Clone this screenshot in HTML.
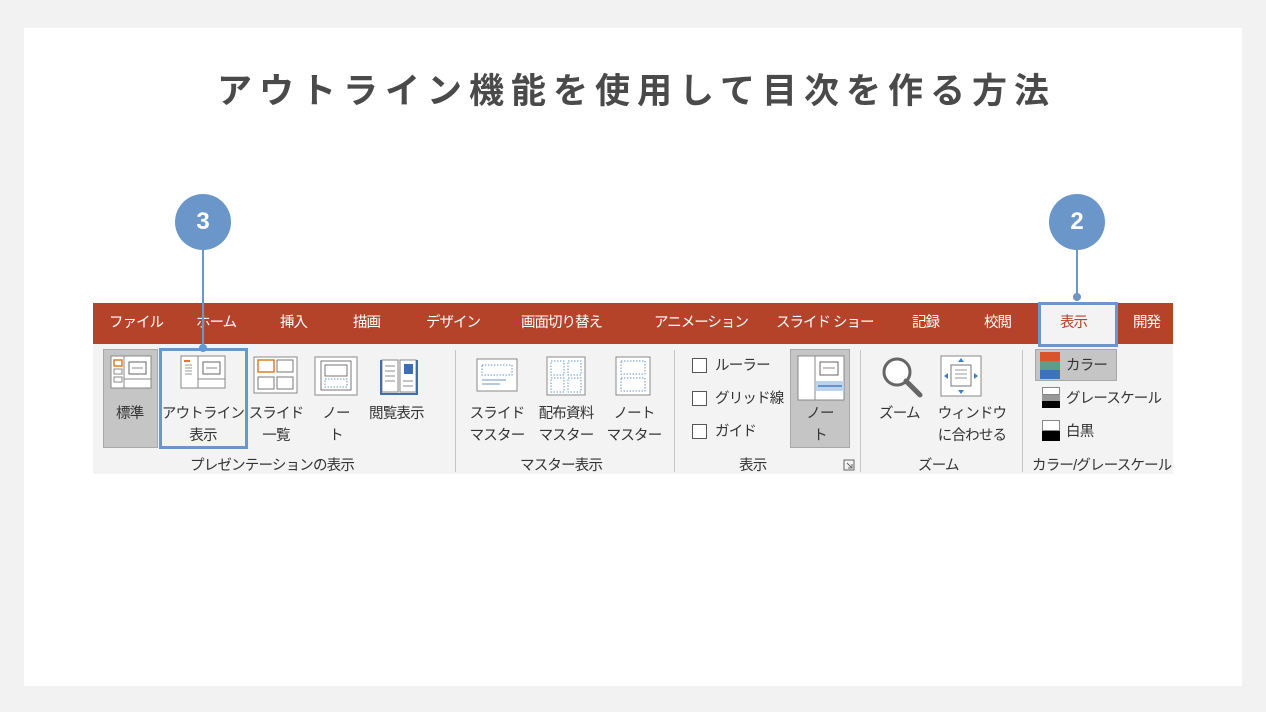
<!DOCTYPE html>
<html><head><meta charset="utf-8"><style>
*{margin:0;padding:0;box-sizing:border-box}
body{width:1266px;height:712px;background:#f2f2f2;position:relative;overflow:hidden;font-family:"Liberation Sans","Noto Sans CJK JP",sans-serif}
.card{position:absolute;left:24px;top:28px;width:1218px;height:658px;background:#fff}
.t{position:absolute;white-space:nowrap;color:#333;font-size:14.5px;line-height:22px;letter-spacing:-0.8px}
.c{text-align:center}
.title{position:absolute;left:0;width:1266px;top:70px;text-align:center;font-size:35px;font-weight:bold;color:#4a4a4a;letter-spacing:7px;line-height:44px;padding-left:7px}
.tabbar{position:absolute;left:93px;top:303px;width:1080px;height:41px;background:#b5432a}
.tab{position:absolute;top:313px;color:#fff;font-size:14.5px;line-height:20px;white-space:nowrap;letter-spacing:-1px}
.body{position:absolute;left:93px;top:344px;width:1080px;height:130px;background:#f3f3f3}
.sep{position:absolute;top:350px;width:1px;height:122px;background:#c6c6c6}
.press{position:absolute;background:#c5c5c5;border:1px solid #a8a8a8}
.circ{position:absolute;width:56px;height:56px;border-radius:50%;background:#6a96c9;color:#fff;font-weight:bold;font-size:24px;line-height:56px;text-align:center}
.line{position:absolute;width:2px;background:#6a96c9}
.box{position:absolute;border:3px solid #6a96c9}
.cb{position:absolute;width:15px;height:15px;border:1px solid #555;background:#fff}
svg{position:absolute}
</style></head><body>
<div class="card"></div>
<div class="title">アウトライン機能を使用して目次を作る方法</div>

<div class="tabbar"></div>
<div class="tab" style="left:109px">ファイル</div>
<div class="tab" style="left:196px">ホーム</div>
<div class="tab" style="left:280px">挿入</div>
<div class="tab" style="left:353px">描画</div>
<div class="tab" style="left:426px">デザイン</div>
<div class="tab" style="left:521px">画面切り替え</div>
<div class="tab" style="left:654px">アニメーション</div>
<div class="tab" style="left:776px">スライド ショー</div>
<div class="tab" style="left:912px">記録</div>
<div class="tab" style="left:984px">校閲</div>
<div style="position:absolute;left:1041px;top:305px;width:74px;height:41px;background:#f3f3f3"></div>
<div class="tab" style="left:1060px;color:#b5432a">表示</div>
<div class="tab" style="left:1133px">開発</div>

<div class="body"></div>
<div class="press" style="left:103px;top:349px;width:55px;height:99px"></div>
<div class="press" style="left:790px;top:349px;width:60px;height:99px"></div>
<div class="press" style="left:1035px;top:349px;width:82px;height:32px"></div>
<div class="sep" style="left:455px"></div>
<div class="sep" style="left:674px"></div>
<div class="sep" style="left:860px"></div>
<div class="sep" style="left:1022px"></div>

<!-- icons -->
<svg style="left:110px;top:355px" width="42" height="34"><rect x="1" y="1" width="40" height="32" fill="#fff" stroke="#888"/><line x1="14" y1="1" x2="14" y2="33" stroke="#888"/><line x1="14" y1="24" x2="41" y2="24" stroke="#888"/><rect x="4" y="5" width="8" height="6" fill="none" stroke="#e07b28" stroke-width="1.5"/><rect x="4" y="14" width="8" height="5" fill="none" stroke="#888"/><rect x="4" y="22" width="8" height="5" fill="none" stroke="#888"/><rect x="19" y="7" width="17" height="12" fill="none" stroke="#666"/><line x1="22" y1="13" x2="33" y2="13" stroke="#888"/></svg>
<svg style="left:180px;top:355px" width="46" height="34"><rect x="1" y="1" width="44" height="32" fill="#fff" stroke="#888"/><line x1="18" y1="1" x2="18" y2="33" stroke="#888"/><line x1="18" y1="24" x2="45" y2="24" stroke="#888"/><line x1="4" y1="6" x2="10" y2="6" stroke="#e07b28" stroke-width="2"/><g stroke="#999"><line x1="5" y1="10" x2="12" y2="10"/><line x1="5" y1="13" x2="12" y2="13"/><line x1="5" y1="16" x2="12" y2="16"/><line x1="5" y1="19" x2="12" y2="19"/></g><rect x="23" y="7" width="17" height="12" fill="none" stroke="#666"/><line x1="26" y1="13" x2="37" y2="13" stroke="#888"/></svg>
<svg style="left:253px;top:356px" width="45" height="38"><rect x="1" y="1" width="43" height="36" fill="#fff" stroke="#888"/><rect x="5" y="4" width="16" height="12" fill="none" stroke="#e07b28" stroke-width="1.5"/><rect x="24" y="4" width="16" height="12" fill="none" stroke="#777"/><rect x="5" y="21" width="16" height="12" fill="none" stroke="#777"/><rect x="24" y="21" width="16" height="12" fill="none" stroke="#777"/></svg>
<svg style="left:314px;top:356px" width="44" height="40"><rect x="1" y="1" width="42" height="38" fill="#fff" stroke="#888"/><rect x="7" y="5" width="30" height="29" fill="none" stroke="#777"/><rect x="11" y="9" width="22" height="11" fill="none" stroke="#777"/><rect x="11" y="23" width="22" height="8" fill="none" stroke="#6a96c9" stroke-dasharray="1.5 1.5"/></svg>
<svg style="left:380px;top:356px" width="38" height="40"><path d="M2 4h16v32H2z M20 4h16v32H20z" fill="#fff" stroke="#888"/><path d="M1 4v34h36V4" fill="none" stroke="#3d6fb0" stroke-width="2"/><g stroke="#888"><line x1="5" y1="10" x2="15" y2="10"/><line x1="5" y1="15" x2="15" y2="15"/><line x1="5" y1="20" x2="15" y2="20"/><line x1="5" y1="25" x2="15" y2="25"/><line x1="23" y1="25" x2="33" y2="25"/><line x1="23" y1="30" x2="33" y2="30"/></g><rect x="24" y="8" width="9" height="10" fill="#3d6fb0"/></svg>
<svg style="left:476px;top:358px" width="42" height="34"><rect x="1" y="1" width="40" height="32" fill="#fff" stroke="#888"/><rect x="6" y="7" width="30" height="10" fill="none" stroke="#6a96c9" stroke-dasharray="1.5 1.5"/><line x1="6" y1="22" x2="30" y2="22" stroke="#6a96c9"/><line x1="6" y1="26" x2="24" y2="26" stroke="#6a96c9"/></svg>
<svg style="left:546px;top:356px" width="40" height="40"><rect x="1" y="1" width="38" height="38" fill="#fff" stroke="#888"/><g fill="none" stroke="#6a96c9" stroke-dasharray="1.5 1.5"><rect x="5" y="5" width="13" height="14"/><rect x="22" y="5" width="13" height="14"/><rect x="5" y="22" width="13" height="14"/><rect x="22" y="22" width="13" height="14"/></g></svg>
<svg style="left:615px;top:356px" width="36" height="40"><rect x="1" y="1" width="34" height="38" fill="#fff" stroke="#888"/><g fill="none" stroke="#6a96c9" stroke-dasharray="1.5 1.5"><rect x="6" y="5" width="24" height="13"/><rect x="6" y="22" width="24" height="13"/></g></svg>
<div class="cb" style="left:692px;top:358px"></div>
<div class="cb" style="left:692px;top:391px"></div>
<div class="cb" style="left:692px;top:424px"></div>
<svg style="left:797px;top:355px" width="48" height="46"><rect x="1" y="1" width="46" height="44" fill="#fff" stroke="#888"/><line x1="18" y1="1" x2="18" y2="45" stroke="#888"/><rect x="23" y="7" width="18" height="13" fill="none" stroke="#666"/><line x1="26" y1="13" x2="38" y2="13" stroke="#888"/><rect x="19" y="26" width="28" height="10" fill="#bcd3ee"/><line x1="21" y1="31" x2="45" y2="31" stroke="#4a7dbb" stroke-width="1.5"/></svg>
<svg style="left:880px;top:355px" width="44" height="44"><circle cx="17" cy="17" r="13" fill="#fff" stroke="#666" stroke-width="3"/><line x1="26" y1="26" x2="40" y2="40" stroke="#666" stroke-width="5" stroke-linecap="round"/></svg>
<svg style="left:940px;top:355px" width="42" height="42"><rect x="1" y="1" width="40" height="40" fill="#fff" stroke="#888"/><rect x="11" y="10" width="20" height="21" fill="none" stroke="#777"/><g stroke="#999"><line x1="15" y1="15" x2="27" y2="15"/><line x1="15" y1="19" x2="27" y2="19"/><line x1="15" y1="23" x2="27" y2="23"/></g><g fill="#3d7fc9"><path d="M21 3l3 4h-6z"/><path d="M21 39l3-4h-6z"/><path d="M4 21l4-3v6z"/><path d="M38 21l-4-3v6z"/></g></svg>
<svg style="left:1040px;top:352px" width="20" height="28"><rect x="0" y="0" width="20" height="9" fill="#d9532b"/><rect x="0" y="9" width="20" height="9" fill="#5d9e86"/><rect x="0" y="18" width="20" height="9" fill="#3d74b8"/></svg>
<svg style="left:1042px;top:387px" width="18" height="22"><rect x="0.5" y="0.5" width="17" height="7" fill="#fff" stroke="#888"/><rect x="0" y="8" width="18" height="6" fill="#999"/><rect x="0" y="14" width="18" height="7" fill="#000"/></svg>
<svg style="left:1042px;top:420px" width="18" height="22"><rect x="0.5" y="0.5" width="17" height="10" fill="#fff" stroke="#888"/><rect x="0" y="11" width="18" height="10" fill="#000"/></svg>
<svg style="left:843px;top:459px" width="12" height="12"><rect x="1" y="1" width="10" height="10" fill="none" stroke="#666"/><path d="M4 4l5 5M9 5v4H5" fill="none" stroke="#666"/></svg>

<!-- labels -->
<div class="t" style="left:116px;top:403px">標準</div>
<div class="t c" style="left:160px;top:403px;width:86px">アウトライン<br>表示</div>
<div class="t c" style="left:246px;top:403px;width:60px">スライド<br>一覧</div>
<div class="t c" style="left:315px;top:403px;width:42px">ノー<br>ト</div>
<div class="t" style="left:369px;top:403px">閲覧表示</div>
<div class="t c" style="left:466px;top:403px;width:62px">スライド<br>マスター</div>
<div class="t c" style="left:530px;top:403px;width:72px">配布資料<br>マスター</div>
<div class="t c" style="left:604px;top:403px;width:60px">ノート<br>マスター</div>
<div class="t" style="left:715px;top:355px">ルーラー</div>
<div class="t" style="left:715px;top:388px">グリッド線</div>
<div class="t" style="left:715px;top:421px">ガイド</div>
<div class="t c" style="left:790px;top:403px;width:60px">ノー<br>ト</div>
<div class="t" style="left:879px;top:403px">ズーム</div>
<div class="t c" style="left:930px;top:403px;width:84px">ウィンドウ<br>に合わせる</div>
<div class="t" style="left:1066px;top:355px">カラー</div>
<div class="t" style="left:1066px;top:388px">グレースケール</div>
<div class="t" style="left:1066px;top:421px">白黒</div>
<div class="t" style="left:190px;top:455px">プレゼンテーションの表示</div>
<div class="t" style="left:520px;top:455px">マスター表示</div>
<div class="t" style="left:739px;top:455px">表示</div>
<div class="t" style="left:918px;top:455px">ズーム</div>
<div class="t" style="left:1032px;top:455px">カラー/グレースケール</div>

<!-- annotations -->
<div class="line" style="left:202px;top:248px;height:100px"></div>
<div style="position:absolute;left:199px;top:344px;width:8px;height:8px;border-radius:50%;background:#6a96c9"></div>
<div class="box" style="left:159px;top:348px;width:89px;height:101px"></div>
<div class="circ" style="left:175px;top:194px">3</div>
<div class="line" style="left:1076px;top:248px;height:50px"></div>
<div style="position:absolute;left:1073px;top:293px;width:8px;height:8px;border-radius:50%;background:#6a96c9"></div>
<div class="box" style="left:1038px;top:302px;width:80px;height:45px"></div>
<div class="circ" style="left:1049px;top:194px">2</div>
</body></html>
